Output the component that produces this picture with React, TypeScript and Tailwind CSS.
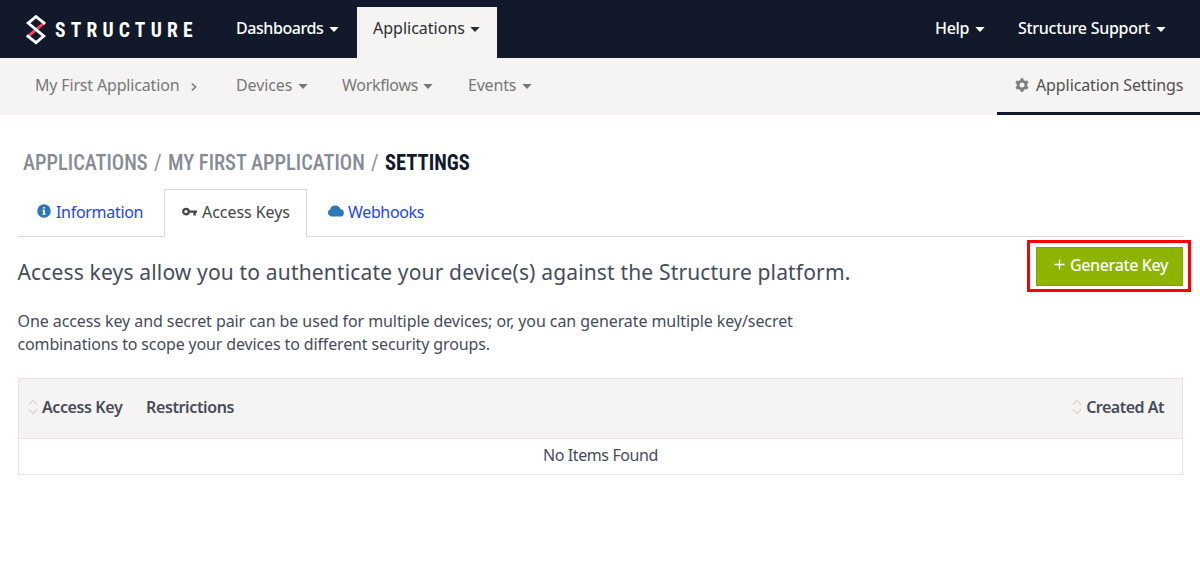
import type { ReactNode } from "react";

function Caret({ className = "" }: { className?: string }) {
  return (
    <svg width="10" height="5" viewBox="0 0 10 5" className={`shrink-0 ${className}`} fill="currentColor">
      <path d="M0.3 0H9.7L5 5Z" />
    </svg>
  );
}

function Logo() {
  return (
    <div className="flex items-center text-white">
      <svg width="22" height="32" viewBox="0 0 22 32" fill="none" strokeWidth="2.8">
        <path d="M18.4 9.7L3.6 21.9" stroke="#ff4053" />
        <path d="M20.2 9.9L11 2.6L3.2 9.1L18.8 22.1L11 28.6L1.8 21.3" stroke="#fff" />
      </svg>
      <span className="mt-[1px] ml-[8px] font-['Roboto_Condensed'] text-[19.5px] leading-none font-bold tracking-[5.2px]">
        STRUCTURE
      </span>
    </div>
  );
}

function SortIcon() {
  return (
    <svg width="10" height="16" viewBox="0 0 10 16" fill="none" stroke="#d6d6d4" strokeWidth="1.3">
      <path d="M0.8 5.8L5 1.5L9.2 5.8M0.8 10.2L5 14.5L9.2 10.2" />
    </svg>
  );
}

function GearIcon() {
  return (
    <svg width="14" height="14" viewBox="0 0 14 14" fill="none" stroke="#7d7d7d">
      <circle cx="7" cy="7" r="3.9" strokeWidth="2.8" />
      <path
        d="M7 0.3V2.5M7 11.5V13.7M1.2 3.65L3.1 4.75M10.9 9.25L12.8 10.35M1.2 10.35L3.1 9.25M10.9 4.75L12.8 3.65"
        strokeWidth="3"
      />
    </svg>
  );
}

function Crumb({ width, className, children }: { width: string; className: string; children: ReactNode }) {
  return (
    <span className={`${width} ${className}`}>
      <span className="inline-block origin-left scale-x-[0.914]">{children}</span>
    </span>
  );
}

export default function App() {
  return (
    <div className="h-[567px] w-[1200px] overflow-hidden bg-white font-['Noto_Sans',sans-serif] text-[16px] leading-6 whitespace-nowrap text-[#464c5b]">
      <header className="flex h-[58px] items-end bg-[#11192b] pl-[25px] font-medium text-white">
        <div className="flex h-[58px] w-[211px] items-center pt-[2px]">
          <Logo />
        </div>
        <nav className="flex grow items-end">
          <div className="flex h-[51px] w-[121px] items-center pb-[9px]">
            <span className="w-[93px] tracking-[-0.42px]">Dashboards</span>
            <Caret className="mt-[2px]" />
          </div>
          <div className="flex h-[51px] w-[140px] items-center bg-[#f5f4f2] pb-[9px] pl-4 text-[#2b2d33]">
            <span className="w-[97px] font-normal">Applications</span>
            <Caret className="mt-[2px]" />
          </div>
        </nav>
        <div className="flex h-[51px] items-center pr-[34px] pb-[9px]">
          <span className="w-10 tracking-[-0.3px]">Help</span>
          <Caret className="mt-[2px]" />
          <span className="ml-[33px] w-[138px] tracking-[-0.29px]">Structure Support</span>
          <Caret className="mt-[2px]" />
        </div>
      </header>

      <div className="flex h-[57px] bg-[#f5f4f2] pl-[35px] text-[#787878]">
        <div className="flex grow items-center pb-[3px]">
          <span className="w-[156px] tracking-[-0.17px]">My First Application</span>
          <svg width="6" height="8" viewBox="0 0 6 8" fill="none" stroke="currentColor" strokeWidth="1.5" className="mt-[3px]">
            <path d="M0.8 0.5L4.6 4L0.8 7.5" />
          </svg>
          <span className="ml-[39px] w-[62px] tracking-[-0.1px]">Devices</span>
          <Caret className="mt-[3px]" />
          <span className="ml-[34px] w-[81px] tracking-[-0.28px]">Workflows</span>
          <Caret className="mt-[3px]" />
          <span className="ml-[35px] w-[54px] tracking-[-0.2px]">Events</span>
          <Caret className="mt-[3px]" />
        </div>
        <div className="flex w-[203px] items-center border-b-[3px] border-[#11192b] pl-[18px] text-[#505050]">
          <GearIcon />
          <span className="mb-[1px] ml-[7px] tracking-[-0.1px]">Application Settings</span>
        </div>
      </div>

      <main className="pr-[17px] pl-[18px]">
        <h1 className="flex h-[74px] items-center pt-5 pl-[5px] font-['Roboto_Condensed'] text-[22.4px] font-medium text-[#878c95]">
          <Crumb width="w-[131px]" className="">APPLICATIONS</Crumb>
          <Crumb width="w-[14px]" className="font-normal">/</Crumb>
          <Crumb width="w-[203px]" className="">MY FIRST APPLICATION</Crumb>
          <Crumb width="w-[14px]" className="font-normal">/</Crumb>
          <Crumb width="w-[90px]" className="font-bold text-[#11192b]">SETTINGS</Crumb>
        </h1>

        <div className="flex h-[48px] text-[#2444f8]">
          <div className="flex w-[146px] items-center border-b border-[#dcdcdc] pb-px pl-[19px]">
            <svg width="14" height="14" viewBox="0 0 14 14" className="mb-[2px]">
              <circle cx="7" cy="7" r="6.8" fill="#2f78b7" />
              <path d="M6.1 3H7.9V4.6H6.1ZM5.4 5.8H7.9V9.8H8.6V10.8H5.4V9.8H6.1V6.8H5.4Z" fill="#fff" />
            </svg>
            <span className="ml-[5px] tracking-[-0.3px]">Information</span>
          </div>
          <div className="flex w-[143px] items-center border-x border-t border-[#dcdcdc] pb-[3px] pl-[17px] text-[#454545]">
            <svg width="15" height="10" viewBox="0 0 15 10" fill="none" stroke="currentColor">
              <circle cx="4" cy="4.6" r="2.8" strokeWidth="2.2" />
              <path d="M6.8 4.6H15M12.6 4.6V8.4" strokeWidth="2.4" />
            </svg>
            <span className="ml-[5px] tracking-[-0.05px]">Access Keys</span>
          </div>
          <div className="flex grow items-center border-b border-[#dcdcdc] pb-px pl-5">
            <svg width="17" height="12" viewBox="0 0 17 12" fill="#2f78b7" className="mb-[2px]">
              <path d="M4 11.5A3.7 3.7 0 0 1 3 4.5A5.5 5.5 0 0 1 13.5 4.3A3.6 3.6 0 0 1 13 11.5Z" />
            </svg>
            <span className="ml-1 tracking-[-0.35px]">Webhooks</span>
          </div>
        </div>

        <section className="flex h-[141px] justify-between">
          <div className="-ml-[0.5px]">
            <h2 className="mt-[19px] text-[21px] leading-8 tracking-[0.16px]">
              Access keys allow you to authenticate your device(s) against the Structure platform.
            </h2>
            <p className="mt-[22px] leading-[23px]">
              <span className="block tracking-[-0.08px]">
                One access key and secret pair can be used for multiple devices; or, you can generate multiple key/secret
              </span>
              <span className="block tracking-[-0.14px]">
                combinations to scope your devices to different security groups.
              </span>
            </p>
          </div>
          <div className="mt-[3px] -mr-2 h-[52px] w-[164px] border-[3px] border-[#ff0000] pt-[4px] pl-[6px]">
            <button className="flex h-[39px] w-[147px] items-center border border-[#7fa300] bg-[#8cb400] pb-[3px] pl-[17px] font-medium text-white">
              <svg width="11" height="11" viewBox="0 0 11 11" stroke="#fff" strokeWidth="1.4" className="mb-[1px]">
                <path d="M5.5 0.5V10.5M0.5 5.5H10.5" />
              </svg>
              <span className="ml-[5px] tracking-[-0.37px]">Generate Key</span>
            </button>
          </div>
        </section>

        <div className="h-[97px] border border-[#e5e5e8]">
          <div className="flex h-[60px] items-center border-b border-[#e5e5e8] bg-[#f5f4f2] pr-[18px] pb-[3px] pl-[9px] font-semibold">
            <SortIcon />
            <span className="ml-[4px] w-[104px] tracking-[-0.4px]">Access Key</span>
            <span className="grow tracking-[-0.38px]">Restrictions</span>
            <SortIcon />
            <span className="ml-[4px] tracking-[-0.5px]">Created At</span>
          </div>
          <div className="flex h-[35px] items-center justify-center pb-[3px] tracking-[-0.4px]">No Items Found</div>
        </div>
      </main>
    </div>
  );
}
